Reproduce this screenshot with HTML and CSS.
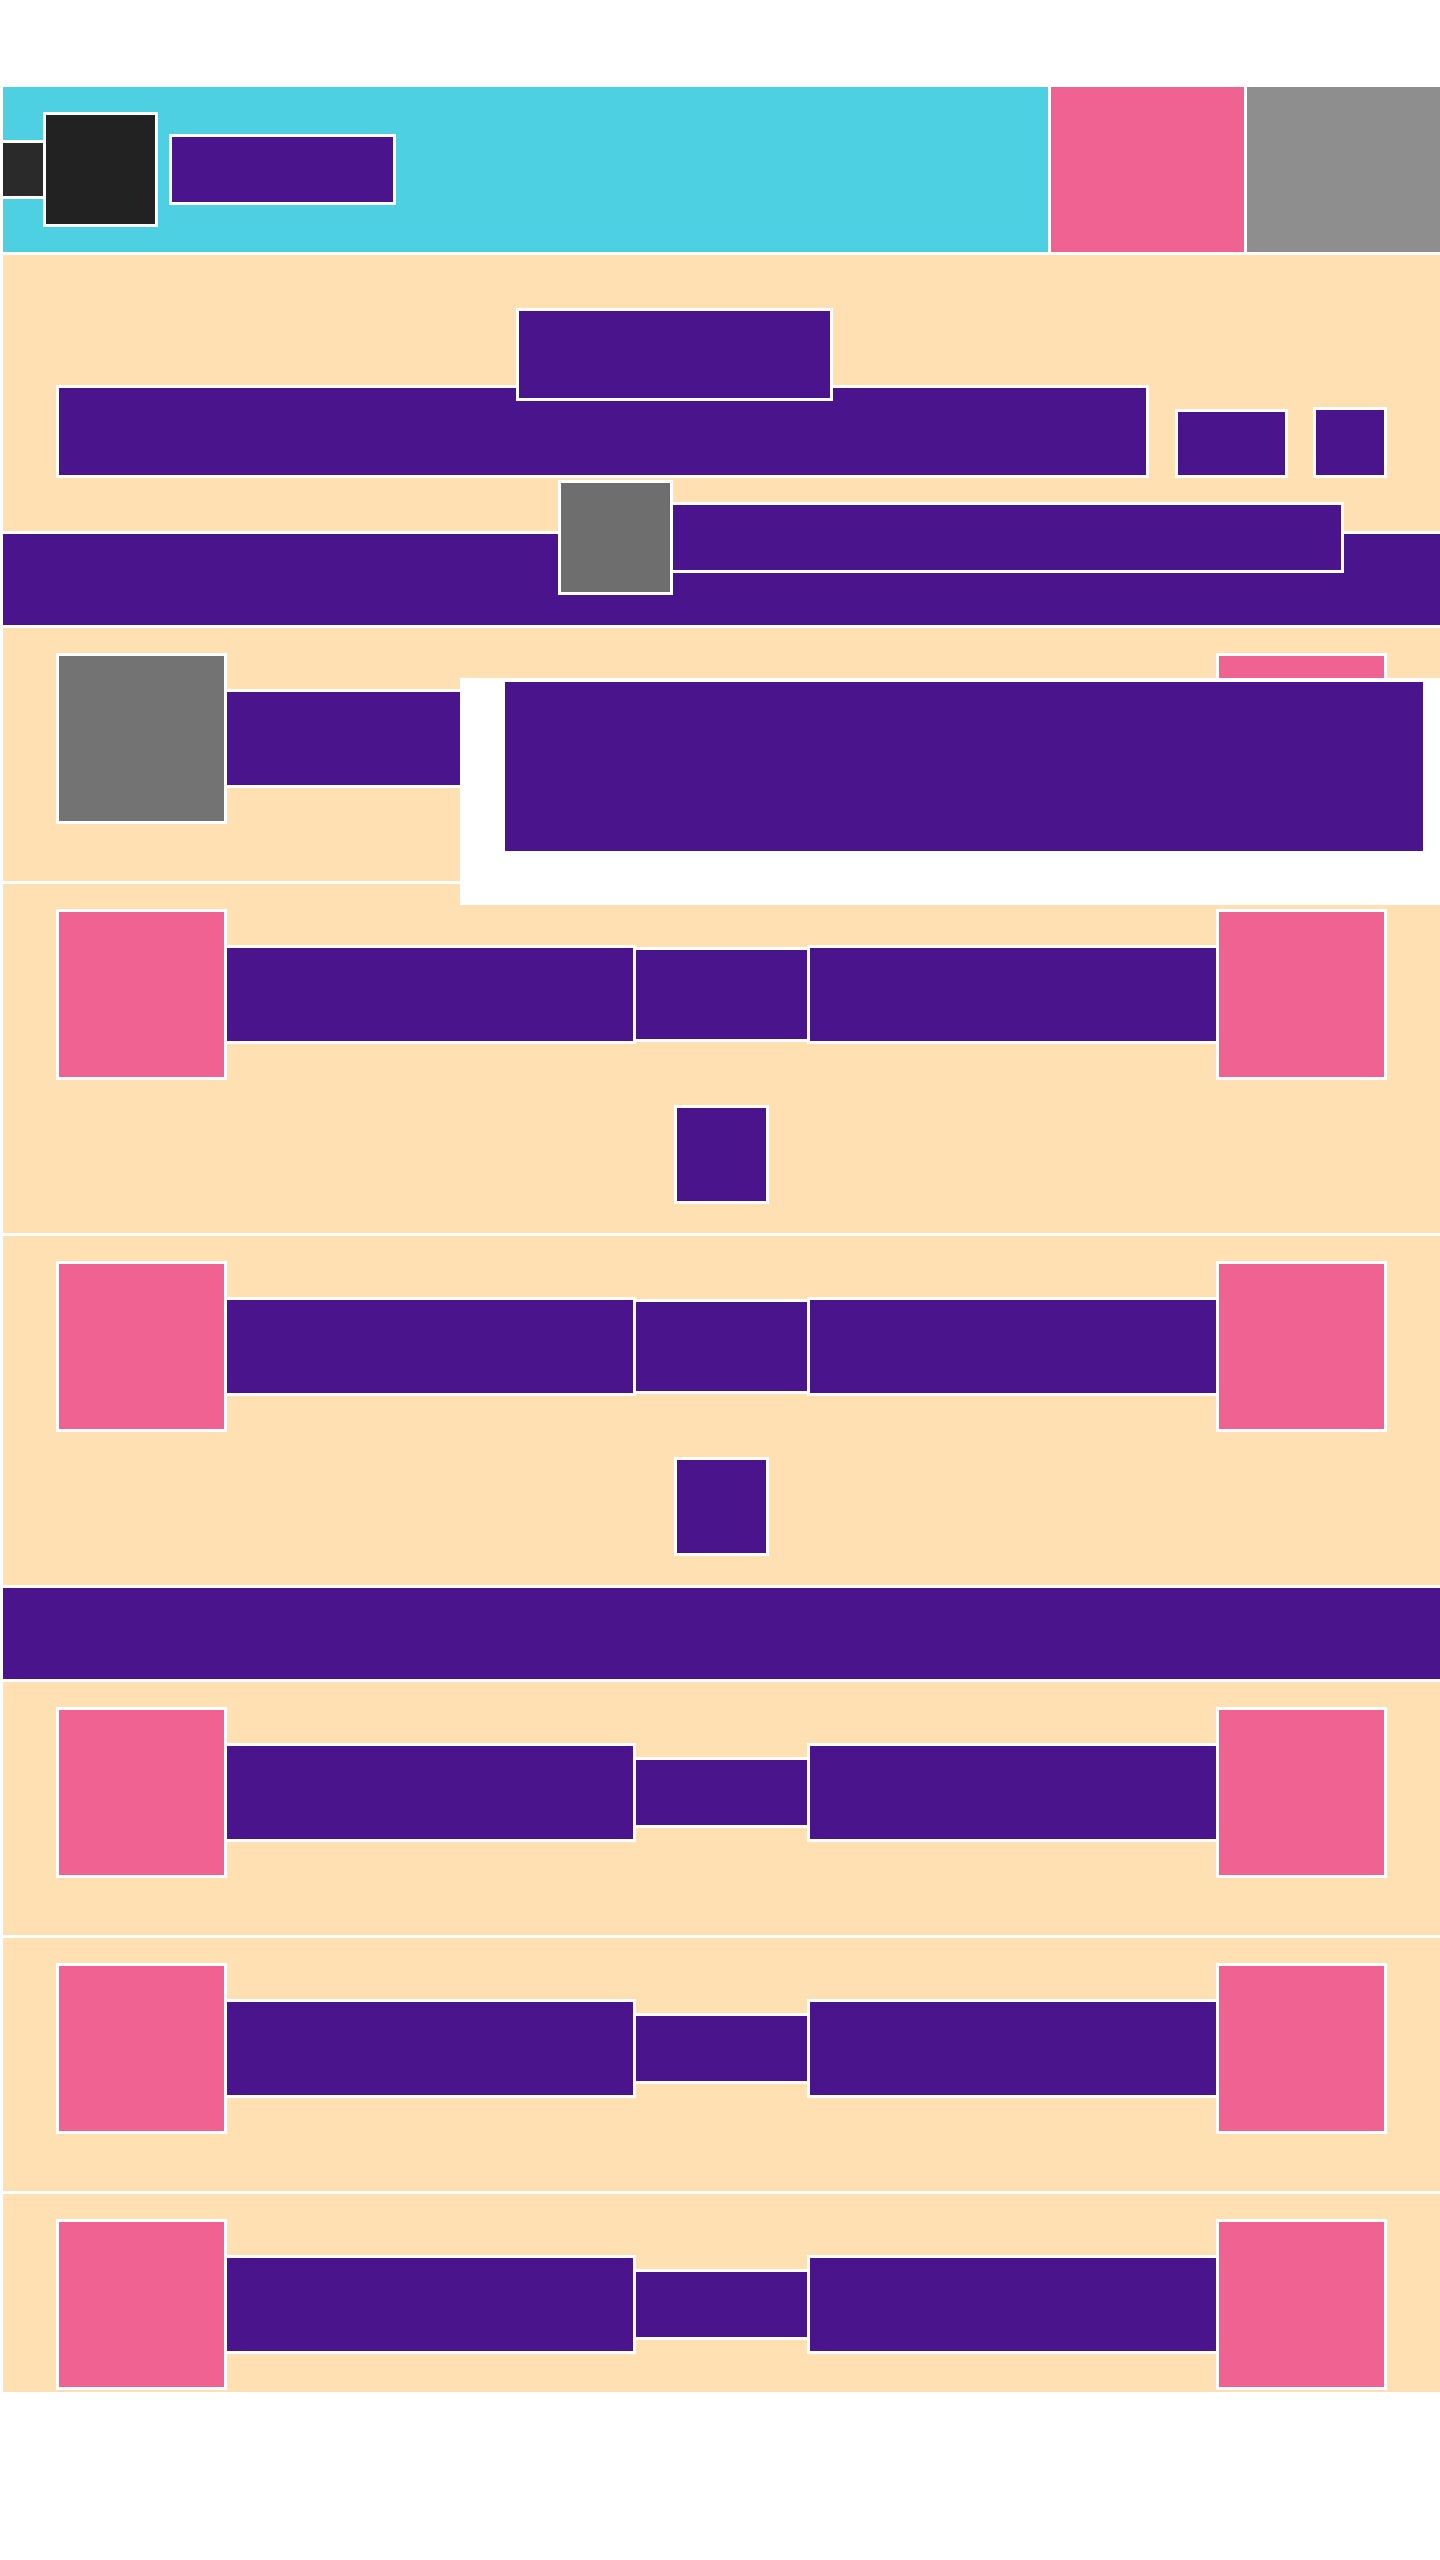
FILE: index.html
```html
<!DOCTYPE html>
<html lang="en">
<head>
<meta charset="utf-8">
<title>Matches</title>
<link rel="stylesheet" href="styles.css">
</head>
<body>
<div class="page">
  <div class="app">
    <header class="topbar">
      <div class="brand">
        <div class="nav-toggle"></div>
        <div class="logo"></div>
        <div class="brand-name"></div>
      </div>
      <div class="tab tab-pink"></div>
      <div class="tab tab-grey"></div>
    </header>

    <section class="hero">
      <div class="hero-title"></div>
      <div class="hero-search">
        <div class="search-field"></div>
        <div class="search-btn"></div>
        <div class="search-icon"></div>
      </div>
      <div class="hero-user">
        <div class="avatar"></div>
        <div class="user-name"></div>
      </div>
    </section>

    <div class="band"></div>

    <div class="match">
      <div class="match-line">
        <div class="team team-grey"></div>
        <div class="team-name"></div>
        <div class="score"></div>
        <div class="team-name"></div>
        <div class="team"></div>
      </div>
    </div>

    <div class="match match-tall">
      <div class="match-line">
        <div class="team"></div>
        <div class="team-name"></div>
        <div class="score score-tall"></div>
        <div class="team-name"></div>
        <div class="team"></div>
      </div>
      <div class="match-action"></div>
    </div>

    <div class="match match-tall">
      <div class="match-line">
        <div class="team"></div>
        <div class="team-name"></div>
        <div class="score score-tall"></div>
        <div class="team-name"></div>
        <div class="team"></div>
      </div>
      <div class="match-action"></div>
    </div>

    <div class="band"></div>

    <div class="match">
      <div class="match-line">
        <div class="team"></div>
        <div class="team-name"></div>
        <div class="score"></div>
        <div class="team-name"></div>
        <div class="team"></div>
      </div>
    </div>

    <div class="match">
      <div class="match-line">
        <div class="team"></div>
        <div class="team-name"></div>
        <div class="score"></div>
        <div class="team-name"></div>
        <div class="team"></div>
      </div>
    </div>

    <div class="match">
      <div class="match-line">
        <div class="team"></div>
        <div class="team-name"></div>
        <div class="score"></div>
        <div class="team-name"></div>
        <div class="team"></div>
      </div>
    </div>

    <div class="dropdown">
      <div class="dropdown-item"></div>
    </div>
  </div>
</div>
</body>
</html>
```

FILE: styles.css
```css
* {
  box-sizing: border-box;
}

html, body {
  margin: 0;
  padding: 0;
  background: #ffffff;
  font-family: "Liberation Sans", Arial, sans-serif;
}

.page {
  padding-top: 87px;
}

.app {
  position: relative;
  height: 2305px;
  overflow: hidden;
  padding-left: 3px;
  display: flex;
  flex-direction: column;
  gap: 3px;
  background: #ffffff;
}

.app > * {
  flex-shrink: 0;
}

/* ---------- top bar ---------- */
.topbar {
  display: flex;
  gap: 3px;
  height: 165px;
  background: #ffffff;
}

.brand {
  flex: 1;
  display: flex;
  align-items: center;
  background: #4dd0e1;
}

.nav-toggle {
  width: 46px;
  height: 59px;
  margin-left: -3px;
  background: #2a2a2a;
  border: 3px solid #ffffff;
}

.logo {
  width: 115px;
  height: 115px;
  margin-left: -3px;
  background: #222222;
  border: 3px solid #ffffff;
}

.brand-name {
  width: 227px;
  height: 71px;
  margin-left: 11px;
  background: #4a148c;
  border: 3px solid #ffffff;
}

.tab {
  width: 193px;
}

.tab-pink {
  background: #f06292;
}

.tab-grey {
  background: #8e8e8e;
}

/* ---------- hero ---------- */
.hero {
  height: 276px;
  background: #ffe0b2;
  padding-top: 53px;
  display: flex;
  flex-direction: column;
  align-items: flex-start;
}

.hero > * {
  flex-shrink: 0;
}

.hero-title {
  position: relative;
  z-index: 1;
  width: 317px;
  height: 93px;
  margin-left: 513px;
  margin-bottom: -16px;
  background: #4a148c;
  border: 3px solid #ffffff;
}

.hero-search {
  display: flex;
  align-items: flex-end;
  margin-left: 53px;
}

.search-field {
  width: 1093px;
  height: 93px;
  background: #4a148c;
  border: 3px solid #ffffff;
}

.search-btn {
  width: 113px;
  height: 69px;
  margin-left: 26px;
  background: #4a148c;
  border: 3px solid #ffffff;
}

.search-icon {
  width: 74px;
  height: 71px;
  margin-left: 25px;
  background: #4a148c;
  border: 3px solid #ffffff;
}

.hero-user {
  position: relative;
  z-index: 2;
  display: flex;
  align-items: center;
  margin-top: 2px;
  margin-left: 555px;
}

.avatar {
  width: 115px;
  height: 115px;
  background: #6e6e6e;
  border: 3px solid #ffffff;
}

.user-name {
  width: 674px;
  height: 71px;
  margin-left: -3px;
  background: #4a148c;
  border: 3px solid #ffffff;
}

/* ---------- bands ---------- */
.band {
  height: 91px;
  background: #4a148c;
}

/* ---------- match rows ---------- */
.match {
  height: 253px;
  background: #ffe0b2;
  padding-top: 25px;
  display: flex;
  flex-direction: column;
}

.match > * {
  flex-shrink: 0;
}

.match-tall {
  height: 349px;
}

.match-line {
  display: flex;
  align-items: center;
  height: 171px;
  margin-left: 53px;
}

.match-line > * {
  flex-shrink: 0;
}

.team {
  width: 171px;
  height: 171px;
  background: #f06292;
  border: 3px solid #ffffff;
}

.team + .team-name,
.team-name + .score,
.score + .team-name,
.team-name + .team {
  margin-left: -3px;
}

.team-grey {
  background: #737373;
}

.team-name {
  width: 412px;
  height: 99px;
  background: #4a148c;
  border: 3px solid #ffffff;
}

.score {
  width: 177px;
  height: 71px;
  background: #4a148c;
  border: 3px solid #ffffff;
}

.score-tall {
  height: 95px;
}

.match-action {
  align-self: center;
  width: 95px;
  height: 99px;
  margin-top: 25px;
  background: #4a148c;
  border: 3px solid #ffffff;
}

/* ---------- dropdown overlay ---------- */
.dropdown {
  position: absolute;
  top: 591px;
  left: 460px;
  width: 980px;
  height: 227px;
  z-index: 5;
  background: #ffffff;
  padding: 4px 0 0 45px;
}

.dropdown-item {
  width: 918px;
  height: 169px;
  background: #4a148c;
}
```
